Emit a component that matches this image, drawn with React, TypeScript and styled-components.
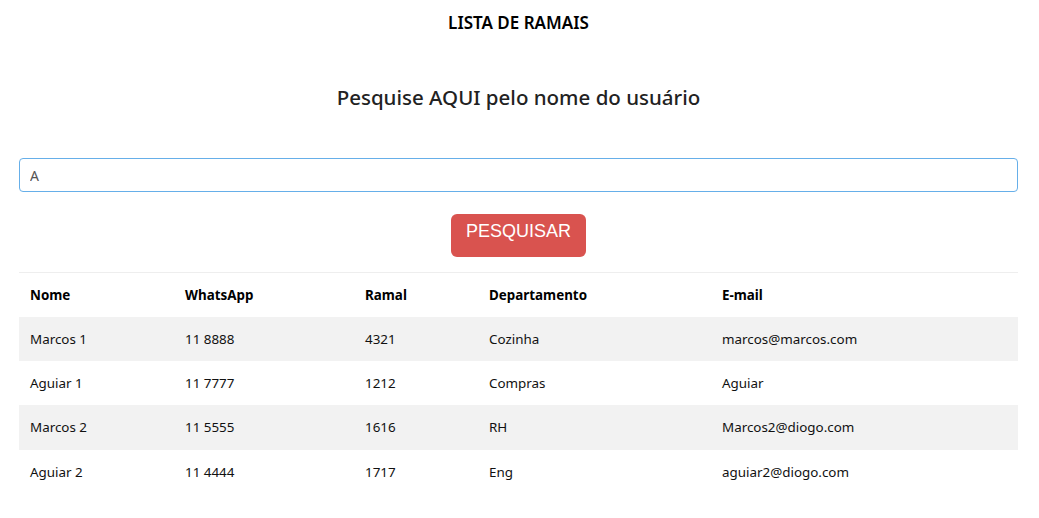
import React from "react";
import styled, { createGlobalStyle } from "styled-components";

const Global = createGlobalStyle`
  html, body { margin: 0; padding: 0; background: #fff; }
  body { font-family: "Noto Sans", "Open Sans", sans-serif; color: #000; }
`;

const Page = styled.div`
  width: 1039px;
  display: flex;
  flex-direction: column;
  align-items: stretch;
  padding: 0 21px 0 19px;
  box-sizing: border-box;
`;

const Title = styled.h1`
  margin: 11px 0 0;
  font-size: 17px;
  line-height: 24px;
  font-weight: 600;
  text-align: center;
  color: #000;
`;

const Subtitle = styled.h2`
  margin: 47px 0 0;
  font-size: 20.5px;
  line-height: 30px;
  font-weight: 500;
  text-align: center;
  color: #222;
`;

const SearchInput = styled.input`
  margin-top: 46px;
  height: 34px;
  box-sizing: border-box;
  border: 1px solid #66afe9;
  border-radius: 4px;
  padding: 0 10px;
  font-family: "Noto Sans", sans-serif;
  font-size: 14px;
  color: #555;
  outline: none;
  width: 100%;
`;

const ButtonRow = styled.div`
  display: flex;
  justify-content: center;
  margin-top: 22px;
`;

const Button = styled.button`
  width: 135px;
  height: 43px;
  background: #d9534f;
  border: none;
  border-radius: 6px;
  color: #fff;
  font-family: "Liberation Sans", Arial, sans-serif;
  font-size: 18px;
  padding: 0 0 8px;
  cursor: pointer;
`;

const Table = styled.table`
  margin-top: 15px;
  width: 100%;
  table-layout: fixed;
  border-collapse: collapse;
  border-top: 1px solid #eee;
  font-size: 13.4px;
`;

const Th = styled.th<{ $w: number }>`
  box-sizing: border-box;
  width: ${(p) => p.$w}px;
  text-align: left;
  font-weight: 700;
  padding: 0 11px;
  height: 44px;
  color: #000;
`;

const Tr = styled.tr<{ $striped: boolean }>`
  background: ${(p) => (p.$striped ? "#f2f2f2" : "#fff")};
`;

const Td = styled.td`
  padding: 0 11px;
  height: 44.4px;
  color: #111;
`;

const cols = [
  { label: "Nome", w: 155 },
  { label: "WhatsApp", w: 180 },
  { label: "Ramal", w: 124 },
  { label: "Departamento", w: 233 },
  { label: "E-mail", w: 307 },
];

const rows = [
  ["Marcos 1", "11 8888", "4321", "Cozinha", "marcos@marcos.com"],
  ["Aguiar 1", "11 7777", "1212", "Compras", "Aguiar"],
  ["Marcos 2", "11 5555", "1616", "RH", "Marcos2@diogo.com"],
  ["Aguiar 2", "11 4444", "1717", "Eng", "aguiar2@diogo.com"],
];

export default function App() {
  return (
    <>
      <Global />
      <Page>
        <Title>LISTA DE RAMAIS</Title>
        <Subtitle>Pesquise AQUI pelo nome do usuário</Subtitle>
        <SearchInput defaultValue="A" />
        <ButtonRow>
          <Button>PESQUISAR</Button>
        </ButtonRow>
        <Table>
          <thead>
            <tr>
              {cols.map((c) => (
                <Th key={c.label} $w={c.w}>
                  {c.label}
                </Th>
              ))}
            </tr>
          </thead>
          <tbody>
            {rows.map((r, i) => (
              <Tr key={i} $striped={i % 2 === 0}>
                {r.map((v, j) => (
                  <Td key={j}>{v}</Td>
                ))}
              </Tr>
            ))}
          </tbody>
        </Table>
      </Page>
    </>
  );
}
